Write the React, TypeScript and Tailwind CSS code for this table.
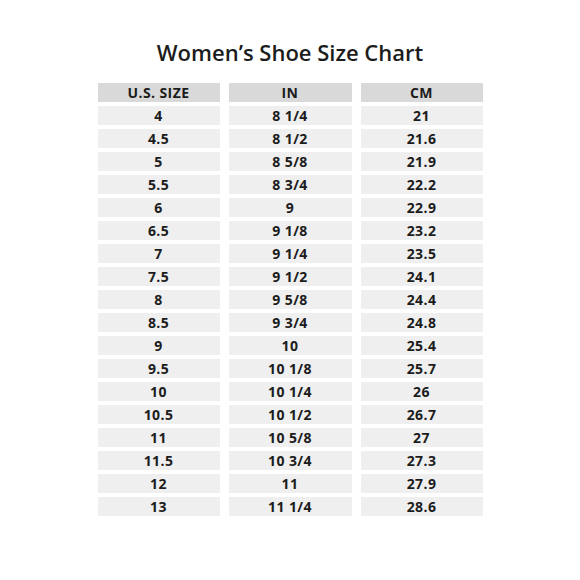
import React from "react";

const rows: [string, string, string][] = [
  ["4", "8 1/4", "21"],
  ["4.5", "8 1/2", "21.6"],
  ["5", "8 5/8", "21.9"],
  ["5.5", "8 3/4", "22.2"],
  ["6", "9", "22.9"],
  ["6.5", "9 1/8", "23.2"],
  ["7", "9 1/4", "23.5"],
  ["7.5", "9 1/2", "24.1"],
  ["8", "9 5/8", "24.4"],
  ["8.5", "9 3/4", "24.8"],
  ["9", "10", "25.4"],
  ["9.5", "10 1/8", "25.7"],
  ["10", "10 1/4", "26"],
  ["10.5", "10 1/2", "26.7"],
  ["11", "10 5/8", "27"],
  ["11.5", "10 3/4", "27.3"],
  ["12", "11", "27.9"],
  ["13", "11 1/4", "28.6"],
];

export default function App() {
  return (
    <div
      className="w-[580px] h-[580px] bg-white flex flex-col items-center text-[#1c1c1c]"
      style={{ fontFamily: '"Open Sans", "Liberation Sans", sans-serif' }}
    >
      <h1 className="mt-[38px] h-[28px] leading-[28px] text-[22px] font-semibold">
        Women’s Shoe Size Chart
      </h1>
      <div className="mt-[17px] grid grid-cols-[122px_123px_122px] gap-x-[9px] gap-y-[4px]">
        {["U.S. SIZE", "IN", "CM"].map((h) => (
          <div
            key={h}
            className="h-[19px] bg-[#d9d9d9] flex items-center justify-center text-[14px] tracking-[0.4px] font-bold leading-none"
          >
            {h}
          </div>
        ))}
        {rows.map((r) =>
          r.map((c, i) => (
            <div
              key={r[0] + "-" + i}
              className="h-[19px] bg-[#efefef] flex items-center justify-center text-[14px] tracking-[0.4px] font-bold leading-none"
            >
              {c}
            </div>
          ))
        )}
      </div>
    </div>
  );
}
